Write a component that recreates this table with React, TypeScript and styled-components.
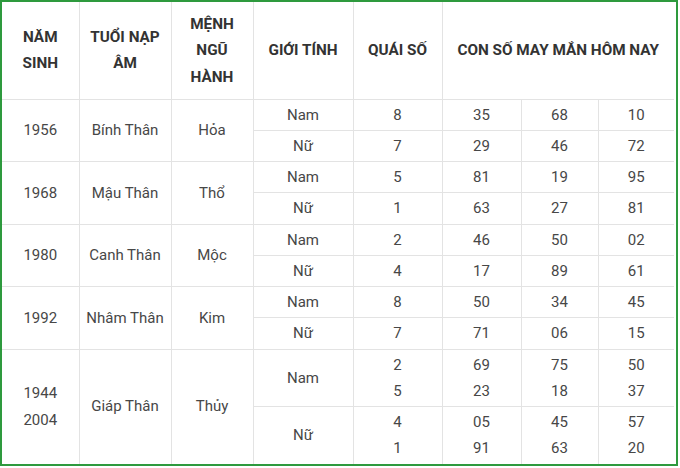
import styled, { createGlobalStyle } from 'styled-components';

const GlobalStyle = createGlobalStyle`
  html, body {
    margin: 0;
    padding: 0;
    background: #ffffff;
  }
  body {
    font-family: Roboto, "Noto Sans", "Liberation Sans", sans-serif;
  }
`;

interface GenderRow {
  gender: string;
  quai: string[];
  numbers: string[][];
}

interface YearGroup {
  years: string[];
  napAm: string;
  menh: string;
  rows: GenderRow[];
}

const groups: YearGroup[] = [
  {
    years: ['1956'],
    napAm: 'Bính Thân',
    menh: 'Hỏa',
    rows: [
      { gender: 'Nam', quai: ['8'], numbers: [['35', '68', '10']] },
      { gender: 'Nữ', quai: ['7'], numbers: [['29', '46', '72']] },
    ],
  },
  {
    years: ['1968'],
    napAm: 'Mậu Thân',
    menh: 'Thổ',
    rows: [
      { gender: 'Nam', quai: ['5'], numbers: [['81', '19', '95']] },
      { gender: 'Nữ', quai: ['1'], numbers: [['63', '27', '81']] },
    ],
  },
  {
    years: ['1980'],
    napAm: 'Canh Thân',
    menh: 'Mộc',
    rows: [
      { gender: 'Nam', quai: ['2'], numbers: [['46', '50', '02']] },
      { gender: 'Nữ', quai: ['4'], numbers: [['17', '89', '61']] },
    ],
  },
  {
    years: ['1992'],
    napAm: 'Nhâm Thân',
    menh: 'Kim',
    rows: [
      { gender: 'Nam', quai: ['8'], numbers: [['50', '34', '45']] },
      { gender: 'Nữ', quai: ['7'], numbers: [['71', '06', '15']] },
    ],
  },
  {
    years: ['1944', '2004'],
    napAm: 'Giáp Thân',
    menh: 'Thủy',
    rows: [
      {
        gender: 'Nam',
        quai: ['2', '5'],
        numbers: [
          ['69', '75', '50'],
          ['23', '18', '37'],
        ],
      },
      {
        gender: 'Nữ',
        quai: ['4', '1'],
        numbers: [
          ['05', '45', '57'],
          ['91', '63', '20'],
        ],
      },
    ],
  },
];

const colWidths = [77, 92, 82, 100, 89, 79, 77, 76];

const Frame = styled.div`
  width: 678px;
  box-sizing: border-box;
  border: 2px solid #2e9a3e;
  padding-right: 2px;
  background: #ffffff;
`;

const Table = styled.table`
  width: 672px;
  border-collapse: collapse;
  border-style: hidden;
  table-layout: fixed;
`;

const HeadCell = styled.th`
  border: 1px solid #e3e3e3;
  padding: 8.5px 4px;
  font-size: 15.3px;
  font-weight: 700;
  line-height: 26.5px;
  color: #333333;
  text-align: center;
  vertical-align: middle;
`;

const Cell = styled.td`
  border: 1px solid #e3e3e3;
  padding: 2px 4px;
  font-size: 15px;
  font-weight: 400;
  line-height: 26.25px;
  color: #474747;
  text-align: center;
  vertical-align: middle;
`;

const Lines = ({ items }: { items: string[] }) => (
  <>
    {items.map((t, i) => (
      <div key={i}>{t}</div>
    ))}
  </>
);

export default function App() {
  return (
    <>
      <GlobalStyle />
      <Frame>
        <Table>
          <colgroup>
            {colWidths.map((w, i) => (
              <col key={i} style={{ width: w }} />
            ))}
          </colgroup>
          <thead>
            <tr>
              <HeadCell>NĂM<br />SINH</HeadCell>
              <HeadCell>TUỔI NẠP<br />ÂM</HeadCell>
              <HeadCell>MỆNH<br />NGŨ<br />HÀNH</HeadCell>
              <HeadCell>GIỚI TÍNH</HeadCell>
              <HeadCell>QUÁI SỐ</HeadCell>
              <HeadCell colSpan={3}>CON SỐ MAY MẮN HÔM NAY</HeadCell>
            </tr>
          </thead>
          <tbody>
            {groups.map((g) =>
              g.rows.map((r, ri) => (
                <tr key={g.years.join('-') + r.gender}>
                  {ri === 0 && (
                    <>
                      <Cell rowSpan={g.rows.length}>
                        <Lines items={g.years} />
                      </Cell>
                      <Cell rowSpan={g.rows.length}>{g.napAm}</Cell>
                      <Cell rowSpan={g.rows.length}>{g.menh}</Cell>
                    </>
                  )}
                  <Cell>{r.gender}</Cell>
                  <Cell>
                    <Lines items={r.quai} />
                  </Cell>
                  {[0, 1, 2].map((c) => (
                    <Cell key={c}>
                      <Lines items={r.numbers.map((line) => line[c])} />
                    </Cell>
                  ))}
                </tr>
              ))
            )}
          </tbody>
        </Table>
      </Frame>
    </>
  );
}
